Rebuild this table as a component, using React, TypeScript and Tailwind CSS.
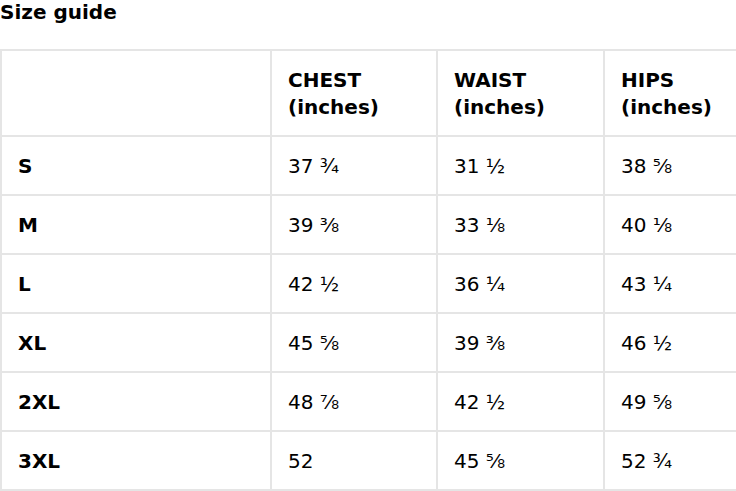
const rows = [
  { size: "S", chest: "37 ¾", waist: "31 ½", hips: "38 ⅝" },
  { size: "M", chest: "39 ⅜", waist: "33 ⅛", hips: "40 ⅛" },
  { size: "L", chest: "42 ½", waist: "36 ¼", hips: "43 ¼" },
  { size: "XL", chest: "45 ⅝", waist: "39 ⅜", hips: "46 ½" },
  { size: "2XL", chest: "48 ⅞", waist: "42 ½", hips: "49 ⅝" },
  { size: "3XL", chest: "52", waist: "45 ⅝", hips: "52 ¾" },
];

const cell = "border-2 border-[#e5e5e5] px-4 pt-[16px] pb-[14px] text-left align-middle leading-[27px]";

export default function App() {
  return (
    <main className="min-h-screen overflow-hidden bg-white text-[20px] text-black [font-family:'DejaVu_Sans',sans-serif]">
      <h2 className="text-[20px] font-bold leading-[24px]">Size guide</h2>
      <table className="mt-[25px] w-[771px] table-fixed border-collapse">
        <colgroup>
          <col className="w-[270px]" />
          <col className="w-[166px]" />
          <col className="w-[167px]" />
          <col className="w-[168px]" />
        </colgroup>
        <thead>
          <tr>
            <th className={cell}></th>
            <th className={`${cell} font-bold`}>CHEST<br />(inches)</th>
            <th className={`${cell} font-bold`}>WAIST<br />(inches)</th>
            <th className={`${cell} font-bold`}>HIPS<br />(inches)</th>
          </tr>
        </thead>
        <tbody>
          {rows.map((r) => (
            <tr key={r.size}>
              <td className={`${cell} font-bold`}>{r.size}</td>
              <td className={cell}>{r.chest}</td>
              <td className={cell}>{r.waist}</td>
              <td className={cell}>{r.hips}</td>
            </tr>
          ))}
        </tbody>
      </table>
    </main>
  );
}
